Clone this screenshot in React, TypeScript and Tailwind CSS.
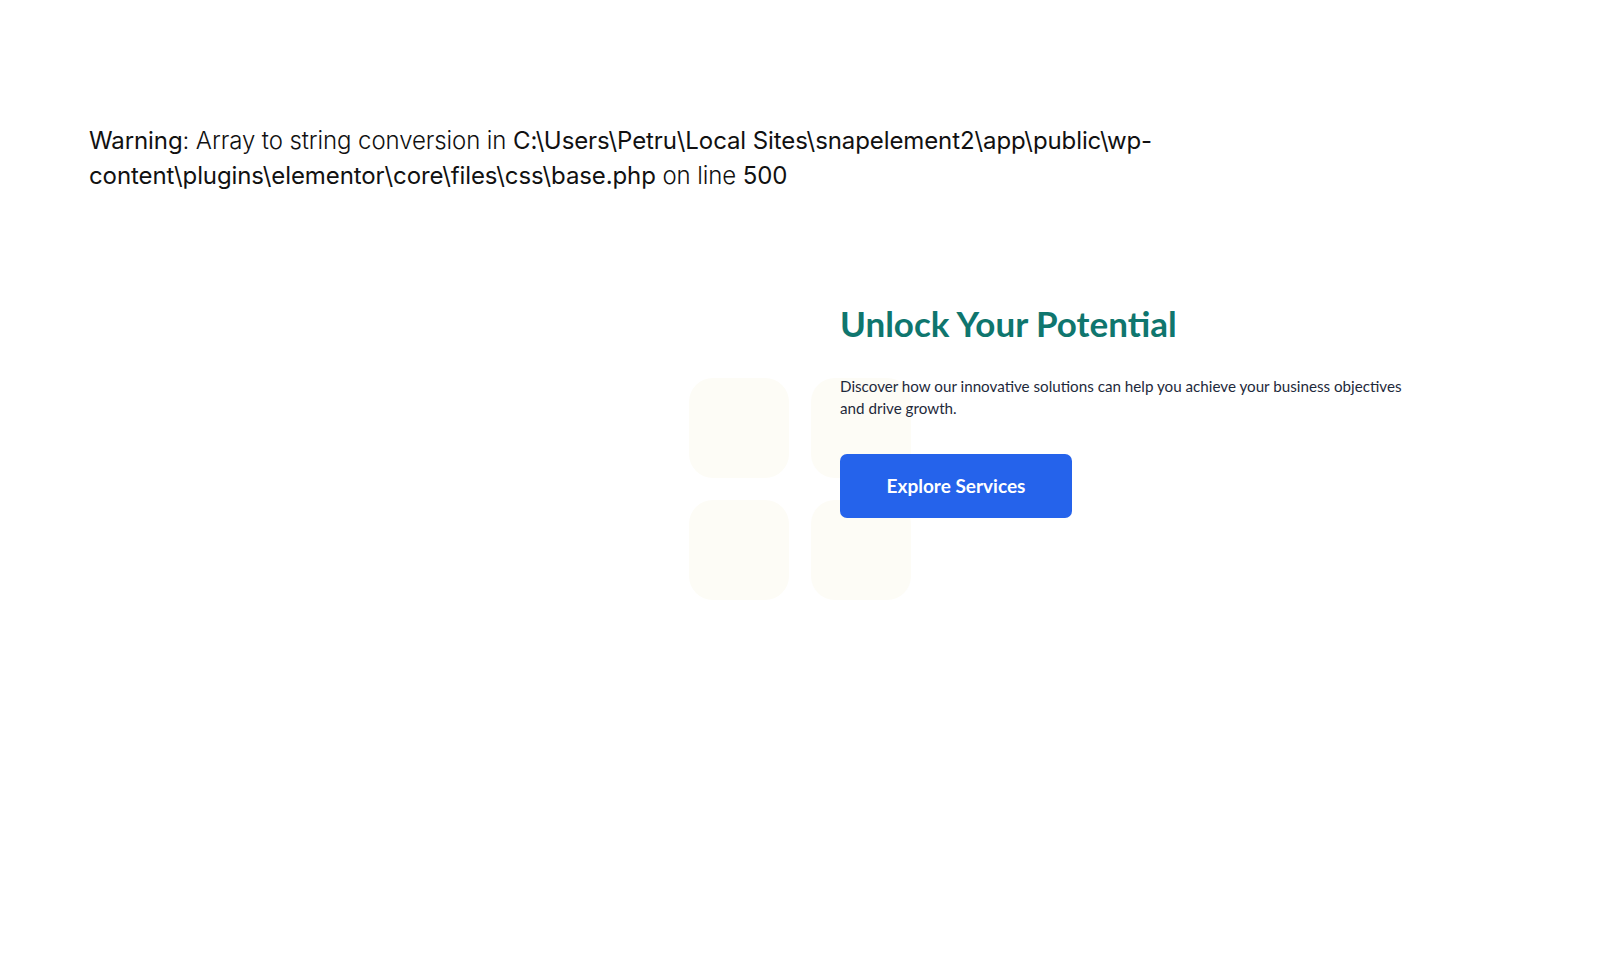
import React from 'react';

function App() {
  return (
    <div className="min-h-screen bg-white text-[#111111]" style={{ fontFamily: 'Inter, "Noto Sans", sans-serif' }}>
      {/* PHP warning */}
      <div className="pl-[89px] pt-[123px] w-[1190px]">
        <p className="text-[24px] leading-[35px] font-light tracking-[-0.1px]">
          <b className="font-normal">Warning</b>: Array to string conversion in{' '}
          <b className="font-normal">C:\Users\Petru\Local Sites\snapelement2\app\public\wp-content\plugins\elementor\core\files\css\base.php</b>{' '}
          on line <b className="font-normal">500</b>
        </p>
      </div>

      {/* Hero */}
      <section className="flex mt-[106px]">
        <div className="relative w-[840px] shrink-0">
          <div className="absolute left-[689px] top-[79px] grid grid-cols-[100px_100px] gap-[22px]">
            <div className="w-[100px] h-[100px] rounded-[24px] bg-[#fdfcf6]" />
            <div className="w-[100px] h-[100px] rounded-[24px] bg-[#fdfcf6]" />
            <div className="w-[100px] h-[100px] rounded-[24px] bg-[#fdfcf6]" />
            <div className="w-[100px] h-[100px] rounded-[24px] bg-[#fdfcf6]" />
          </div>
        </div>
        <div className="relative w-[566px]" style={{ fontFamily: 'Lato, "Noto Sans", sans-serif' }}>
          <h2 className="text-[35px] leading-[48px] font-bold text-[#0f766e]">Unlock Your Potential</h2>
          <p className="mt-[28px] text-[15.2px] leading-[22px] text-[#1e293b]">
            Discover how our innovative solutions can help you achieve your business objectives and drive growth.
          </p>
          <button className="mt-[35px] w-[232px] h-[64px] rounded-[7px] bg-[#2563eb] text-white text-[19px] font-bold">
            Explore Services
          </button>
        </div>
      </section>
    </div>
  );
}

export default App;
